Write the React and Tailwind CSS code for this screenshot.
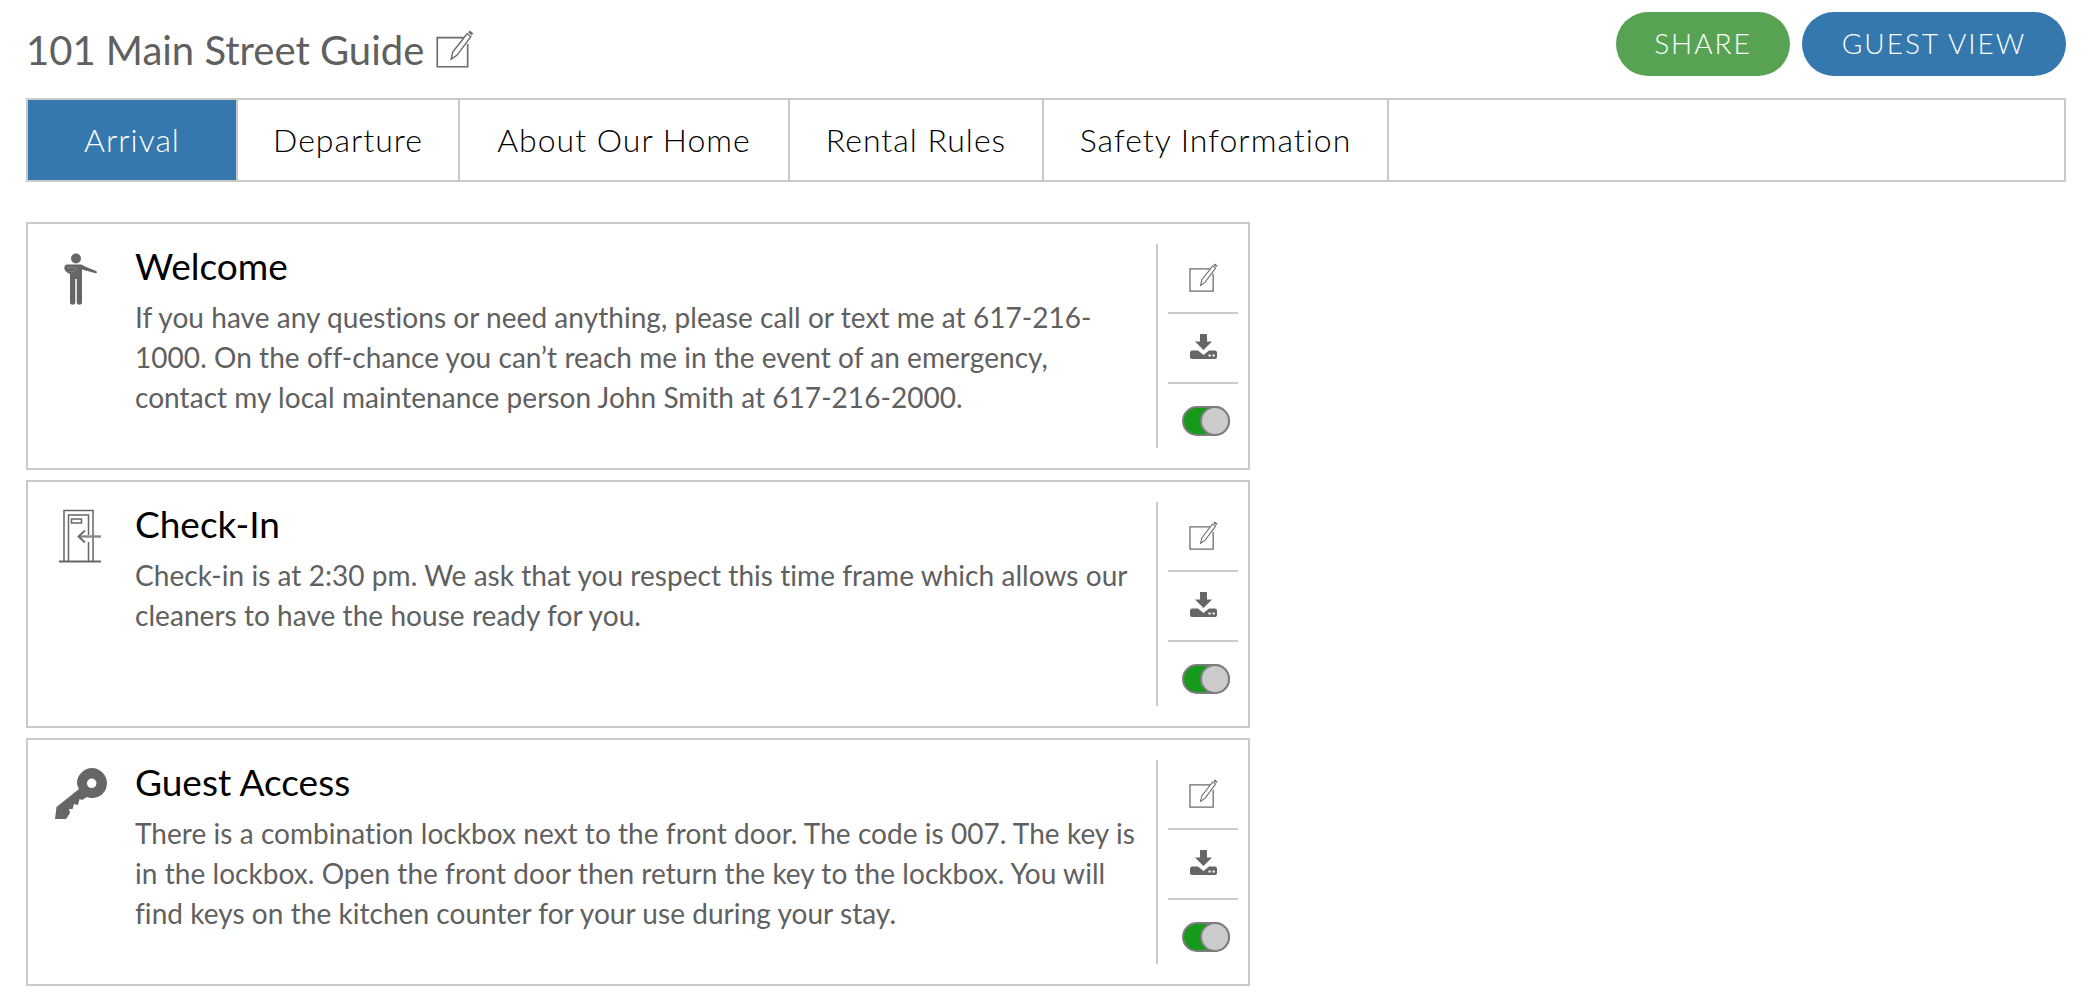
import React from "react";

const tabs = ["Arrival", "Departure", "About Our Home", "Rental Rules", "Safety Information"];
const tabWidths = ["w-[210px]", "w-[222px]", "w-[330px]", "w-[254px]", "w-[345px]"];

const EditIcon = ({ className }) => (
  <svg className={className} viewBox="0 0 30 30" fill="none">
    <path d="M22 6 H1 V29 H25 V11" stroke="#6b6b6b" strokeWidth="1.3" />
    <path d="M12 23 L13.2 17.5 L24.5 3 L27.5 5.2 L16.5 20 Z" stroke="#6b6b6b" strokeWidth="1.1" fill="#fff" />
    <path d="M25.3 2 L26.6 0.4 L29.4 2.6 L28.3 4.2 Z" fill="#6b6b6b" />
  </svg>
);

const PersonIcon = () => (
  <svg className="w-[33px] h-[52px]" viewBox="0 0 33 52" fill="none">
    <circle cx="12" cy="5.5" r="5" fill="#666" />
    <path d="M3 11.5 H16 C18 11.5 19 12 20 13 L32 18 C33.5 18.6 33 20.5 31.5 20.2 L18 16.5 V49.5 C18 52.5 12.8 52.5 12.8 49.5 V26 H11.3 V49.5 C11.3 52.5 6 52.5 6 49.5 V21 C3 20 0 17 0.3 15 C0.5 13 1.5 11.5 3 11.5 Z" fill="#666" />
    <path d="M3 15 C6 13.5 11 14.5 13 16 C12 18 9 19 5 18.5" stroke="#8a8a8a" strokeWidth="0.8" />
  </svg>
);

const DoorIcon = () => (
  <svg className="w-[44px] h-[54px]" viewBox="0 0 44 54" fill="none" stroke="#666" strokeWidth="1.5">
    <path d="M6 52 V1.5 H35 V52" />
    <path d="M10.5 52 V6 H30.5 V26" />
    <path d="M30.5 33 V52" />
    <rect x="13.5" y="10" width="10" height="4" />
    <path d="M1 52.5 H43" strokeWidth="2" />
    <path d="M22 27.5 H43" strokeWidth="2.4" stroke="#888" />
    <path d="M27 21.5 L20.5 27.5 L27 33.5" strokeWidth="1.8" />
  </svg>
);

const KeyIcon = () => (
  <svg className="w-[52px] h-[52px]" viewBox="0 0 52 52">
    <path
      fillRule="evenodd"
      fill="#666"
      d="M37 0 C45 0 52 7 52 15 C52 24 45 30 37 30 C35 30 33.5 29.5 32 29 L27 32 L24.5 31 L23 37 L19 36 L17.5 41 L14 41 L15 45 L11 51 L0 51 L1.5 39 L24 21 C23 19 22 17 22 15 C22 7 29 0 37 0 Z M36.7 10.5 A4.8 4.8 0 1 0 36.7 20.1 A4.8 4.8 0 1 0 36.7 10.5 Z"
    />
  </svg>
);

const DownloadIcon = () => (
  <svg className="w-[27px] h-[25px]" viewBox="0 0 27 25">
    <path d="M10 0 H17 V7.5 H22 L13.5 16 L5 7.5 H10 Z" fill="#666" />
    <path d="M2 16.5 H8 L13.5 21 L19 16.5 H25 C26 16.5 27 17.5 27 18.5 V23 C27 24 26 25 25 25 H2 C1 25 0 24 0 23 V18.5 C0 17.5 1 16.5 2 16.5 Z" fill="#666" />
    <rect x="18.5" y="20.5" width="2.2" height="2" fill="#fff" />
    <rect x="22.5" y="20.5" width="2.2" height="2" fill="#fff" />
  </svg>
);

const Toggle = () => (
  <div className="w-[48px] h-[30px] rounded-full bg-[#159a1c] border-[2px] border-[#7d7d7d] flex justify-end">
    <div className="w-[30px] h-[30px] -m-[2px] shrink-0 rounded-full bg-[#cbcbcb] border-[2px] border-[#7d7d7d]" />
  </div>
);

const cards = [
  {
    title: "Welcome",
    icon: <PersonIcon />,
    iconBox: "pt-[29px] pl-[36px]",
    lines: [
      "If you have any questions or need anything, please call or text me at 617-216-",
      "1000. On the off-chance you can’t reach me in the event of an emergency,",
      "contact my local maintenance person John Smith at 617-216-2000.",
    ],
  },
  {
    title: "Check-In",
    icon: <DoorIcon />,
    iconBox: "pt-[27px] pl-[30px]",
    lines: [
      "Check-in is at 2:30 pm. We ask that you respect this time frame which allows our",
      "cleaners to have the house ready for you.",
    ],
  },
  {
    title: "Guest Access",
    icon: <KeyIcon />,
    iconBox: "pt-[28px] pl-[27px]",
    lines: [
      "There is a combination lockbox next to the front door. The code is 007. The key is",
      "in the lockbox. Open the front door then return the key to the lockbox. You will",
      "find keys on the kitchen counter for your use during your stay.",
    ],
  },
];

const Card = ({ card }) => (
  <div className="w-[1224px] h-[248px] border-[2px] border-[#c9c9c9] flex">
    <div className="w-[107px] shrink-0">
      <div className={card.iconBox}>{card.icon}</div>
    </div>
    <div className="flex-1 pt-[21px]">
      <h2 className="text-[37px] leading-[42px] text-black">{card.title}</h2>
      <div className="mt-[10px] text-[28px] leading-[40px] tracking-[0.05px] text-[#606060]">
        {card.lines.map((line) => (
          <p key={line} className="whitespace-nowrap">{line}</p>
        ))}
      </div>
    </div>
    {/* side actions */}
    <div className="w-[92px] shrink-0 my-[20px] border-l-[2px] border-[#c9c9c9] pl-[10px]">
      <div className="w-[70px] h-[70px] border-b-[2px] border-[#c9c9c9] flex items-center justify-center pb-[2px]">
        <EditIcon className="w-[29px] h-[29px]" />
      </div>
      <div className="w-[70px] h-[70px] border-b-[2px] border-[#c9c9c9] flex items-center justify-center pb-[3px]">
        <DownloadIcon />
      </div>
      <div className="w-[70px] pt-[22px] pl-[14px]">
        <Toggle />
      </div>
    </div>
  </div>
);

export default function App() {
  return (
    <div className="w-[2092px] h-[996px] bg-white overflow-hidden font-['Lato',sans-serif] px-[26px]">
      {/* header */}
      <div className="h-[98px] flex justify-between">
        <div className="flex items-center gap-[12px] pt-[8px] h-[92px]">
          <h1 className="text-[40px] text-[#606060] leading-none">101 Main Street Guide</h1>
          <EditIcon className="w-[38px] h-[38px] -mt-[2px]" />
        </div>
        <div className="flex gap-[12px] pt-[12px]">
          <button className="w-[174px] h-[64px] rounded-full bg-[#58a353] text-white text-[28px] font-light tracking-[2px] pb-[2px]">SHARE</button>
          <button className="w-[264px] h-[64px] rounded-full bg-[#3478ae] text-white text-[28px] font-light tracking-[2px] pb-[2px]">GUEST VIEW</button>
        </div>
      </div>

      {/* tabs */}
      <div className="w-[2040px] h-[84px] border-[2px] border-[#c9c9c9] flex">
        {tabs.map((tab, i) => (
          <div
            key={tab}
            className={`${tabWidths[i]} flex items-center justify-center text-[32px] font-light tracking-[1px] border-r-[2px] border-[#c9c9c9] ${
              i === 0 ? "bg-[#3478ae] text-white" : "text-black"
            }`}
          >
            {tab}
          </div>
        ))}
      </div>

      {/* cards */}
      <div className="mt-[40px] flex flex-col gap-[10px]">
        {cards.map((card) => (
          <Card key={card.title} card={card} />
        ))}
      </div>
    </div>
  );
}
